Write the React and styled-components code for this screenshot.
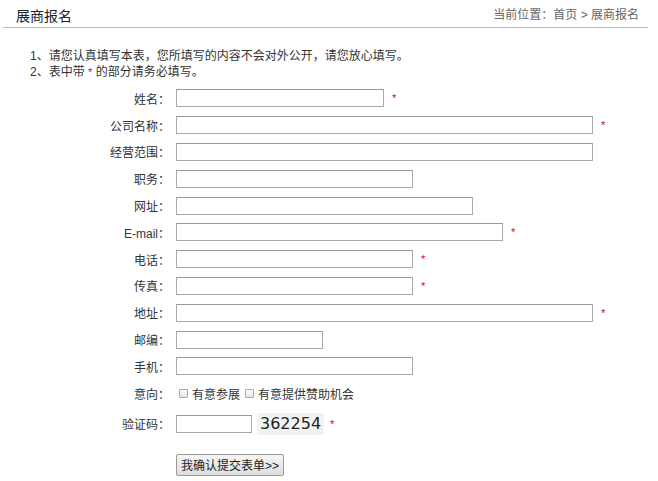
import styled, { createGlobalStyle } from "styled-components";

const GlobalStyle = createGlobalStyle`
  body {
    margin: 0;
    background: #fff;
    font-family: "Liberation Sans", "Noto Sans CJK SC", sans-serif;
    font-size: 12px;
    color: #333;
  }
`;

const fields = [
  { label: "姓名：", width: 208, required: true },
  { label: "公司名称：", width: 417, required: true },
  { label: "经营范围：", width: 417 },
  { label: "职务：", width: 237 },
  { label: "网址：", width: 297 },
  { label: "E-mail：", width: 327, required: true },
  { label: "电话：", width: 237, required: true },
  { label: "传真：", width: 237, required: true },
  { label: "地址：", width: 417, required: true },
  { label: "邮编：", width: 147 },
  { label: "手机：", width: 237 },
];

export default function App() {
  return (
    <>
      <GlobalStyle />
      <Page>
        <TitleBar>
          <Title>展商报名</Title>
          <Crumbs>当前位置：首页 &gt; 展商报名</Crumbs>
        </TitleBar>

        <Notes>
          <p>1、请您认真填写本表，您所填写的内容不会对外公开，请您放心填写。</p>
          <p>
            2、表中带 <Star $gap={0}>*</Star> 的部分请务必填写。
          </p>
        </Notes>

        <Form>
          {fields.map((f) => (
            <Row key={f.label}>
              <Label>{f.label}</Label>
              <Field>
                <TextBox type="text" $w={f.width} />
                {f.required && <Star>*</Star>}
              </Field>
            </Row>
          ))}

          <Row>
            <Label>意向：</Label>
            <Field>
              <Check>
                <CheckBox type="checkbox" />
                有意参展
              </Check>
              <Check>
                <CheckBox type="checkbox" />
                有意提供赞助机会
              </Check>
            </Field>
          </Row>

          <Row $tall>
            <Label>验证码：</Label>
            <Field>
              <TextBox type="text" $w={76} />
              <Captcha>362254</Captcha>
              <Star $gap={6}>*</Star>
            </Field>
          </Row>

          <ButtonRow>
            <Submit type="button">我确认提交表单&gt;&gt;</Submit>
          </ButtonRow>
        </Form>
      </Page>
    </>
  );
}

const Page = styled.div`
  width: 658px;
  padding: 0 10px 0 3px;
  box-sizing: border-box;
`;

const TitleBar = styled.div`
  height: 28px;
  display: flex;
  align-items: center;
  justify-content: space-between;
  border-bottom: 1px solid #bbb;
  padding: 0 9px 0 13px;
  box-sizing: border-box;
`;

const Title = styled.h1`
  margin: 0;
  font-size: 14px;
  font-weight: normal;
  color: #222;
  position: relative;
  top: 1px;
`;

const Crumbs = styled.span`
  color: #666;
  font-size: 12px;
`;

const Notes = styled.div`
  padding: 20px 0 0 27px;

  p {
    margin: 0;
    line-height: 16px;
  }
`;

const Star = styled.span`
  color: #d0021b;
  font-size: 11px;
  margin-left: ${(p) => (p.$gap ?? 8)}px;
`;

const Form = styled.div`
  margin-top: 5px;
`;

const Row = styled.div`
  display: grid;
  grid-template-columns: 173px 1fr;
  align-items: center;
  height: ${(p) => (p.$tall ? "34px" : "26.8px")};
`;

const Label = styled.label`
  text-align: right;
  padding-right: 6px;
`;

const Field = styled.div`
  display: flex;
  align-items: center;
`;

const TextBox = styled.input`
  width: ${(p) => p.$w}px;
  height: 18px;
  box-sizing: border-box;
  margin: 0;
  padding: 0 3px;
  border: 1px solid #a9a9a9;
  border-top-color: #999;
  background: #fff;
  font: inherit;
`;

const Check = styled.label`
  display: flex;
  align-items: center;
  margin-left: 3px;
  margin-right: 2px;
`;

const CheckBox = styled.input`
  appearance: none;
  width: 9px;
  height: 9px;
  margin: 0 4px 0 0;
  border: 1px solid #aaa;
  background: linear-gradient(#fcfcfc, #e6e6e6);
  border-radius: 1px;
`;

const Captcha = styled.span`
  margin-left: 5px;
  padding: 1px 3px;
  background: #f2f2f2;
  font-family: "DejaVu Sans", Verdana, sans-serif;
  font-size: 16px;
  color: #222;
  line-height: 20px;
`;

const ButtonRow = styled.div`
  padding: 13px 0 0 173px;
`;

const Submit = styled.button`
  height: 22px;
  padding: 0 4px;
  border: 1px solid #999;
  border-radius: 2px;
  background: linear-gradient(#f6f6f6, #dedede);
  font: inherit;
  color: #222;
  cursor: pointer;
`;
